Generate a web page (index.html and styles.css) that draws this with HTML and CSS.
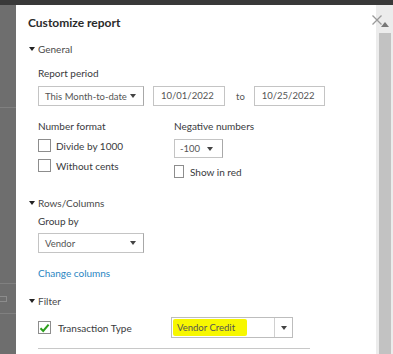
FILE: index.html
```html
<!DOCTYPE html>
<html lang="en">
<head>
  <meta charset="UTF-8">
  <title>Customize report</title>
  <link rel="stylesheet" href="styles.css">
</head>
<body>
  <div class="topbar"></div>
  <div class="stage">
    <div class="side">
      <div class="side-row first"></div>
      <div class="side-row second"><span class="side-icon"></span></div>
    </div>
    <div class="dialog">
      <div class="content">
        <div class="title">Customize report</div>

        <div class="section-head head-general"><span class="caret"></span>General</div>
        <div class="section">
          <div class="label label-period">Report period</div>
          <div class="row period-row">
            <div class="select select-period">
              <span class="select-text">This Month-to-date</span>
              <span class="arrow"></span>
            </div>
            <div class="input date-from">10/01/2022</div>
            <span class="to">to</span>
            <div class="input date-to">10/25/2022</div>
          </div>

          <div class="cols">
            <div class="col col-left">
              <div class="label">Number format</div>
              <label class="check check-1"><span class="box"></span>Divide by 1000</label>
              <label class="check check-2"><span class="box"></span>Without cents</label>
            </div>
            <div class="col col-right">
              <div class="label">Negative numbers</div>
              <div class="select select-neg">
                <span class="select-text">-100</span>
                <span class="arrow"></span>
              </div>
              <label class="check check-red"><span class="box"></span>Show in red</label>
            </div>
          </div>
        </div>

        <div class="section-head head-rows"><span class="caret"></span>Rows/Columns</div>
        <div class="section">
          <div class="label label-group">Group by</div>
          <div class="select select-group">
            <span class="select-text">Vendor</span>
            <span class="arrow"></span>
          </div>
          <a class="link">Change columns</a>
        </div>

        <div class="section-head head-filter"><span class="caret"></span>Filter</div>
        <div class="section">
          <div class="row filter-row">
            <label class="check check-type"><span class="box checked">
              <svg width="11" height="10" viewBox="0 0 11 10"><path d="M1.5 5.2 L4.2 8 L9.6 1.6" fill="none" stroke="#2ca01c" stroke-width="2"/></svg>
            </span>Transaction Type</label>
            <div class="select select-type">
              <span class="select-text"><mark class="hl">Vendor Credit</mark></span>
              <span class="arrow-btn"><span class="arrow"></span></span>
            </div>
          </div>
          <div class="rule"></div>
        </div>
      </div>
      <div class="scrollbar">
        <span class="scroll-up"></span>
        <div class="thumb"></div>
      </div>
      <svg class="close" width="10" height="10" viewBox="0 0 10 10"><path d="M0.5 0.5 L9.5 9.5 M9.5 0.5 L0.5 9.5" stroke="#9a9a9a" stroke-width="1.3"/></svg>
    </div>
  </div>
</body>
</html>
```

FILE: styles.css
```css
* {
  box-sizing: border-box;
}

html, body {
  margin: 0;
  height: 100%;
}

body {
  display: flex;
  flex-direction: column;
  background: #6e6e6e;
  font-family: Lato, "Open Sans", sans-serif;
  font-size: 10px;
  color: #393a3d;
  overflow: hidden;
}

.topbar {
  height: 5px;
  background: #393939;
  flex-shrink: 0;
}

.stage {
  flex: 1;
  display: flex;
}

.side {
  width: 16px;
  background: #6e6e6e;
  padding-top: 102px;
}

.side-row {
  border-top: 1px solid #808080;
}

.side-row.second {
  margin-top: 175px;
  height: 31px;
  border-bottom: 1px solid #808080;
  display: flex;
  align-items: center;
}

.side-icon {
  width: 7px;
  height: 6px;
  border: 1px solid #8c8c8c;
  border-left: none;
}

.dialog {
  flex: 1;
  display: flex;
  background: #fff;
  position: relative;
}

.content {
  flex: 1;
  padding: 9px 0 0 12px;
}

.title {
  font-size: 12px;
  font-weight: 700;
  line-height: 18px;
  color: #2b2b2b;
}

.section-head {
  display: flex;
  align-items: center;
  line-height: 16px;
  margin-left: 1px;
  color: #4a4a4a;
}

.head-general {
  margin-top: 9px;
}

.head-rows {
  margin-top: 17px;
}

.head-filter {
  margin-top: 12px;
}

.caret {
  width: 0;
  height: 0;
  border-left: 3.5px solid transparent;
  border-right: 3.5px solid transparent;
  border-top: 4px solid #222;
  margin-right: 3px;
}

.section {
  padding-left: 10px;
}

.label {
  line-height: 16px;
  color: #393a3d;
}

.label-period {
  margin-top: 8px;
}

.row {
  display: flex;
  align-items: center;
}

.period-row {
  margin-top: 5px;
}

.select {
  display: flex;
  align-items: center;
  border: 1px solid #c4c4c4;
  border-right-color: #a8a8a8;
  background: #fff;
  color: #555;
  font-size: 9.5px;
}

.select-text {
  flex: 1;
  padding-left: 6px;
  white-space: nowrap;
}

.arrow {
  width: 0;
  height: 0;
  border-left: 3px solid transparent;
  border-right: 3px solid transparent;
  border-top: 4px solid #444;
}

.select-period,
.select-group {
  width: 106px;
  height: 20px;
  padding-right: 7px;
}

.input {
  height: 20px;
  border: 1px solid #c4c4c4;
  padding-left: 7px;
  line-height: 18px;
  color: #555;
  font-size: 9.5px;
}

.date-from {
  width: 72px;
  margin-left: 9px;
}

.date-to {
  width: 71px;
  margin-left: 9px;
}

.to {
  margin-left: 11px;
  color: #555;
  font-size: 9.5px;
}

.cols {
  display: flex;
  margin-top: 12px;
}

.col-left {
  width: 136px;
}

.check {
  display: flex;
  align-items: center;
  height: 13px;
  white-space: nowrap;
}

.box {
  width: 13px;
  height: 13px;
  border: 1px solid #8d8d8d;
  margin-right: 5px;
  background: #fff;
  display: flex;
  align-items: center;
  justify-content: center;
}

.check-1 {
  margin-top: 5px;
}

.check-2 {
  margin-top: 7px;
}

.select-neg {
  width: 49px;
  height: 19px;
  margin-top: 5px;
  padding-right: 9px;
}

.select-neg .select-text {
  padding-left: 5px;
}

.check-red {
  margin-top: 7px;
}

.check-red .box {
  width: 10px;
  margin-right: 6px;
}

.label-group {
  margin-top: 2px;
}

.select-group {
  margin-top: 4px;
}

.link {
  display: block;
  margin-top: 12px;
  line-height: 16px;
  color: #2a86c2;
}

.filter-row {
  margin-top: 8px;
  height: 21px;
}

.check-type {
  width: 133px;
}

.check-type .box {
  margin-right: 7px;
}

.select-type {
  width: 122px;
  height: 21px;
  border-color: #bdbdbd;
}

.select-type .select-text {
  padding-left: 1px;
  height: 100%;
  display: flex;
  align-items: center;
}

.hl {
  background: #f7f700;
  color: #555;
  padding: 3px 12px 3px 4px;
  border-radius: 2px;
}

.arrow-btn {
  width: 18px;
  height: 100%;
  border-left: 1px solid #d0d0d0;
  display: flex;
  align-items: center;
  justify-content: center;
}

.rule {
  width: 272px;
  margin-top: 10px;
  border-top: 1px solid #c8c8c8;
}

.scrollbar {
  width: 17px;
  background: #ececec;
  padding: 17px 2px 0 2px;
  display: flex;
  flex-direction: column;
  align-items: center;
}

.scroll-up {
  width: 0;
  height: 0;
  border-left: 4px solid transparent;
  border-right: 4px solid transparent;
  border-bottom: 5px solid #777;
}

.thumb {
  flex: 1;
  width: 12px;
  margin-top: 6px;
  background: #c2c2c2;
}

.close {
  position: absolute;
  right: 11px;
  top: 10px;
}
```
